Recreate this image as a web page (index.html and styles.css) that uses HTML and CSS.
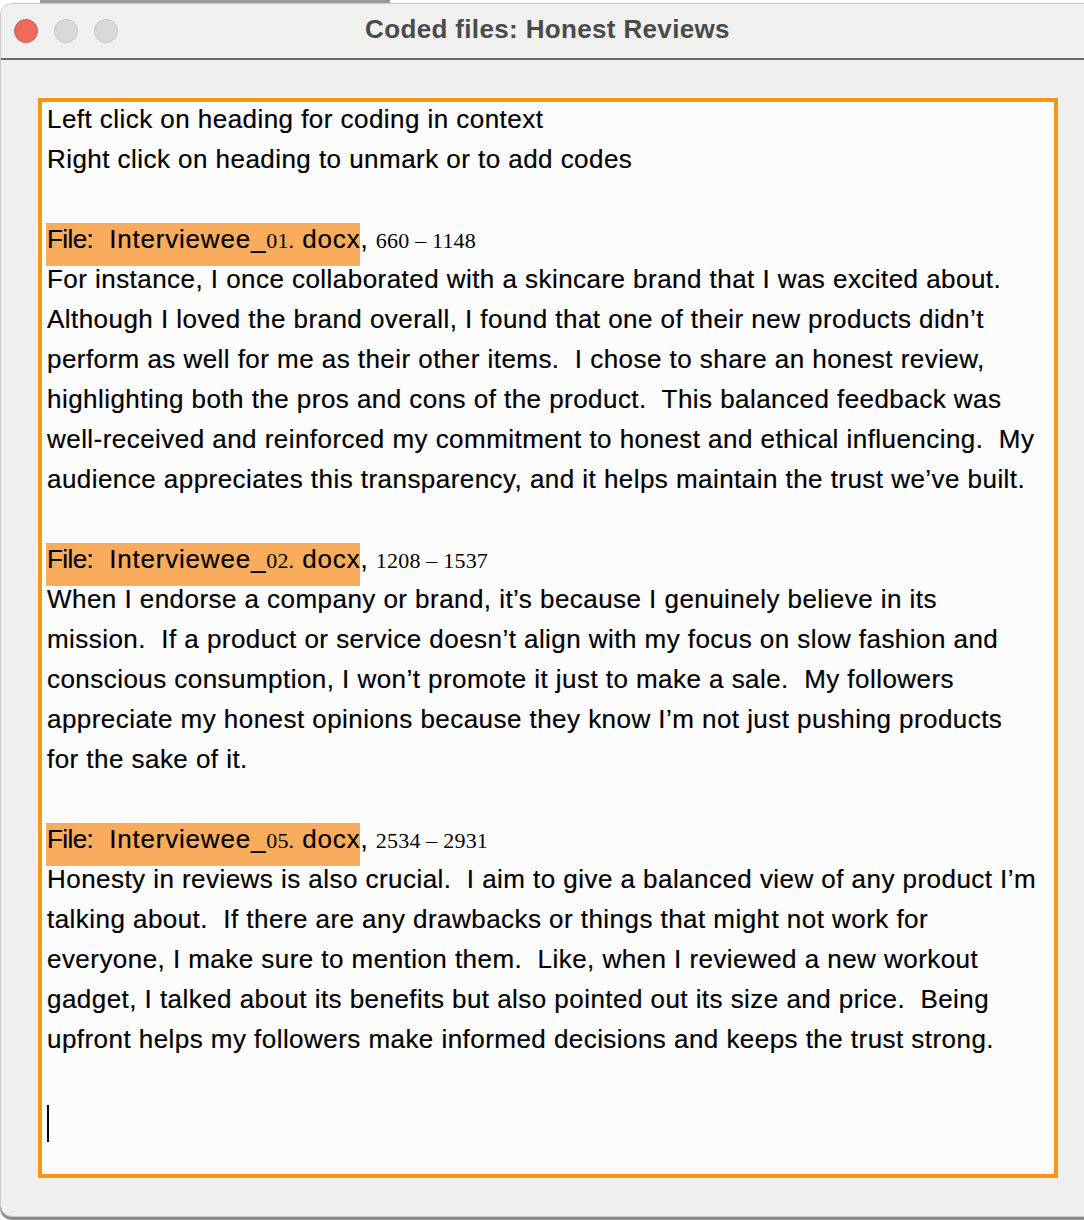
FILE: index.html
```html
<!DOCTYPE html>
<html>
<head>
<meta charset="utf-8">
<title>Coded files: Honest Reviews</title>
<link rel="stylesheet" href="styles.css">
</head>
<body>
<div class="behind"></div>
<div class="window">
  <div class="titlebar">
    <div class="lights">
      <span class="light red"></span>
      <span class="light grey"></span>
      <span class="light grey"></span>
    </div>
    <div class="title">Coded files: Honest Reviews</div>
  </div>
  <div class="content">
    <div class="editor">
      <div class="text">
        <div class="line">Left click on heading for coding in context</div>
        <div class="line">Right click on heading to unmark or to add codes</div>
        <div class="line"> </div>
        <div class="line"><span class="hl"><span class="tight">File:</span>  Interviewee_<span class="serif">01.</span> docx</span>, <span class="serif">660 – 1148</span></div>
        <div class="line">For instance, I once collaborated with a skincare brand that I was excited about.</div>
        <div class="line">Although I loved the brand overall, I found that one of their new products didn’t</div>
        <div class="line">perform as well for me as their other items.  I chose to share an honest review,</div>
        <div class="line">highlighting both the pros and cons of the product.  This balanced feedback was</div>
        <div class="line">well-received and reinforced my commitment to honest and ethical influencing.  My</div>
        <div class="line">audience appreciates this transparency, and it helps maintain the trust we’ve built.</div>
        <div class="line"> </div>
        <div class="line"><span class="hl"><span class="tight">File:</span>  Interviewee_<span class="serif">02.</span> docx</span>, <span class="serif">1208 – 1537</span></div>
        <div class="line">When I endorse a company or brand, it’s because I genuinely believe in its</div>
        <div class="line">mission.  If a product or service doesn’t align with my focus on slow fashion and</div>
        <div class="line">conscious consumption, I won’t promote it just to make a sale.  My followers</div>
        <div class="line">appreciate my honest opinions because they know I’m not just pushing products</div>
        <div class="line">for the sake of it.</div>
        <div class="line"> </div>
        <div class="line"><span class="hl"><span class="tight">File:</span>  Interviewee_<span class="serif">05.</span> docx</span>, <span class="serif">2534 – 2931</span></div>
        <div class="line">Honesty in reviews is also crucial.  I aim to give a balanced view of any product I’m</div>
        <div class="line">talking about.  If there are any drawbacks or things that might not work for</div>
        <div class="line">everyone, I make sure to mention them.  Like, when I reviewed a new workout</div>
        <div class="line">gadget, I talked about its benefits but also pointed out its size and price.  Being</div>
        <div class="line">upfront helps my followers make informed decisions and keeps the trust strong.</div>
        <div class="line"> </div>
        <div class="line"><span class="caret"></span></div>
      </div>
    </div>
  </div>
</div>
</body>
</html>
```

FILE: styles.css
```css
html, body {
  margin: 0;
  padding: 0;
  background: #ffffff;
  overflow: hidden;
}

body {
  width: 1084px;
  height: 1220px;
  font-family: "Liberation Sans", Arial, sans-serif;
}

.behind {
  height: 3px;
  background: linear-gradient(90deg, #ffffff 0 40px, #9a9a9a 40px 390px, #ffffff 390px);
}

.window {
  height: 1212px;
  margin-right: -12px;
  background: #efefef;
  border: 1px solid #c9c9c9;
  border-radius: 12px;
  box-shadow: 0 3px 1px #8a8a8a;
  overflow: hidden;
}

.titlebar {
  height: 54px;
  display: flex;
  align-items: center;
  background: #f0f0ef;
  border-bottom: 2px solid #6a6a6a;
}

.lights {
  display: flex;
  gap: 16px;
  padding-left: 13px;
}

.light {
  width: 22px;
  height: 22px;
  border-radius: 50%;
  border: 1px solid #c4c4c4;
  background: #d9d9d9;
}

.light.red {
  background: #ee6a5f;
  border-color: #d9574c;
}

.title {
  flex: 1;
  text-align: center;
  margin-left: -118px;
  margin-top: -3px;
  font-size: 26px;
  font-weight: bold;
  letter-spacing: 0.35px;
  color: #4a4a4a;
}

.content {
  padding: 38px 0 0 37px;
}

.editor {
  width: 1012px;
  height: 1072px;
  border: 4px solid #f7960f;
  background: #fcfcfc;
  overflow: hidden;
}

.text {
  margin-top: -3px;
  padding-left: 5px;
  font-size: 26px;
  line-height: 40px;
  letter-spacing: 0.45px;
  color: #000;
  -webkit-text-stroke: 0.2px #000;
}

.line {
  height: 40px;
  white-space: pre;
}

.hl {
  background: #f9ad5c;
  padding: 1px 0 12px 1px;
  margin-left: -1px;
  letter-spacing: 0.8px;
}

.tight {
  letter-spacing: -0.6px;
}

.serif {
  font-family: "Liberation Serif", "Times New Roman", serif;
  font-size: 22px;
  letter-spacing: 0.2px;
  -webkit-text-stroke: 0;
}

.caret {
  display: inline-block;
  width: 2px;
  height: 37px;
  background: #000;
  vertical-align: top;
  margin-top: 6px;
}
```
